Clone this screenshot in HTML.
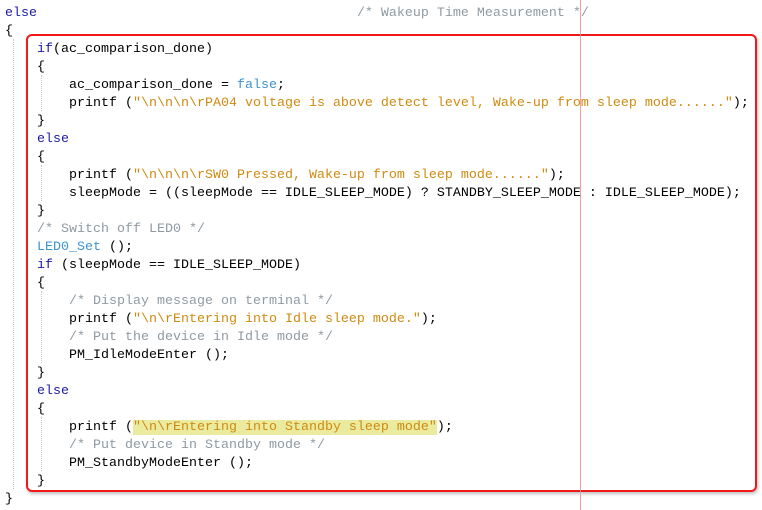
<!DOCTYPE html>
<html><head><meta charset="utf-8"><style>
html,body{margin:0;padding:0;background:#fff;width:762px;height:510px;overflow:hidden;position:relative}
#w{position:absolute;left:0;top:2px;width:762px;height:508px}
.l{position:absolute;left:5px;font-family:"Liberation Mono",monospace;font-size:13.33px;line-height:18px;white-space:pre;color:#000}
.k{color:#1a1aa6}.s{color:#d08a10}.c{color:#8f9aa3}.f{color:#3b93d0}
.hl{background:#ebeba0}
#box{position:absolute;left:26px;top:34px;width:727px;height:454px;border:2px solid #f01818;border-radius:6px;box-shadow:1px 2px 3px rgba(0,0,0,.25)}
#vl{position:absolute;left:580px;top:0;width:1px;height:510px;background:#f5a0a0}
.g{position:absolute;width:0;border-left:1px dotted #c8c8c8}
</style></head><body>
<div class="g" style="left:13px;top:39px;height:450px"></div>
<div class="g" style="left:41px;top:75px;height:36px"></div>
<div class="g" style="left:41px;top:165px;height:36px"></div>
<div class="g" style="left:41px;top:291px;height:72px"></div>
<div class="g" style="left:41px;top:417px;height:54px"></div>
<div id="box"></div>
<div id="vl"></div>
<div id="w">
<div class="l" style="top:3px"><span class="k">else</span>                                        <span class="c">/* Wakeup Time Measurement */</span></div>
<div class="l" style="top:21px">{</div>
<div class="l" style="top:39px">    <span class="k">if</span>(ac_comparison_done)</div>
<div class="l" style="top:57px">    {</div>
<div class="l" style="top:75px">        ac_comparison_done = <span class="f">false</span>;</div>
<div class="l" style="top:93px">        printf (<span class="s">"\n\n\n\rPA04 voltage is above detect level, Wake-up from sleep mode......"</span>);</div>
<div class="l" style="top:111px">    }</div>
<div class="l" style="top:129px">    <span class="k">else</span></div>
<div class="l" style="top:147px">    {</div>
<div class="l" style="top:165px">        printf (<span class="s">"\n\n\n\rSW0 Pressed, Wake-up from sleep mode......"</span>);</div>
<div class="l" style="top:183px">        sleepMode = ((sleepMode == IDLE_SLEEP_MODE) ? STANDBY_SLEEP_MODE : IDLE_SLEEP_MODE);</div>
<div class="l" style="top:201px">    }</div>
<div class="l" style="top:219px">    <span class="c">/* Switch off LED0 */</span></div>
<div class="l" style="top:237px">    <span class="f">LED0_Set</span> ();</div>
<div class="l" style="top:255px">    <span class="k">if</span> (sleepMode == IDLE_SLEEP_MODE)</div>
<div class="l" style="top:273px">    {</div>
<div class="l" style="top:291px">        <span class="c">/* Display message on terminal */</span></div>
<div class="l" style="top:309px">        printf (<span class="s">"\n\rEntering into Idle sleep mode."</span>);</div>
<div class="l" style="top:327px">        <span class="c">/* Put the device in Idle mode */</span></div>
<div class="l" style="top:345px">        PM_IdleModeEnter ();</div>
<div class="l" style="top:363px">    }</div>
<div class="l" style="top:381px">    <span class="k">else</span></div>
<div class="l" style="top:399px">    {</div>
<div class="l" style="top:417px">        printf (<span class="s hl">"\n\rEntering into Standby sleep mode"</span>);</div>
<div class="l" style="top:435px">        <span class="c">/* Put device in Standby mode */</span></div>
<div class="l" style="top:453px">        PM_StandbyModeEnter ();</div>
<div class="l" style="top:471px">    }</div>
<div class="l" style="top:489px">}</div>
</div>
</body></html>
